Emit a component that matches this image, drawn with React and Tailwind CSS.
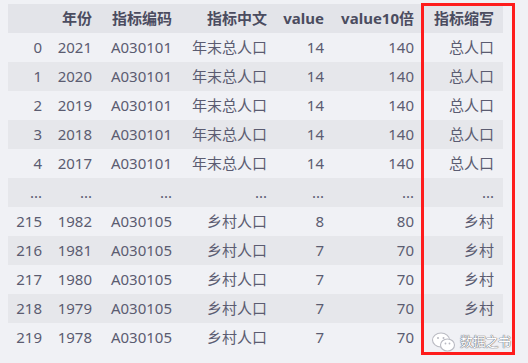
import React from "react"

const headers = ["", "年份", "指标编码", "指标中文", "value", "value10倍", "指标缩写"]
const widths = ["w-[43px]", "w-[50px]", "w-[80px]", "w-[95px]", "w-[57px]", "w-[90px]", "w-[80px]"]

// last row's 指标缩写 sits under the watermark
const rows = [
  ["0", "2021", "A030101", "年末总人口", "14", "140", "总人口"],
  ["1", "2020", "A030101", "年末总人口", "14", "140", "总人口"],
  ["2", "2019", "A030101", "年末总人口", "14", "140", "总人口"],
  ["3", "2018", "A030101", "年末总人口", "14", "140", "总人口"],
  ["4", "2017", "A030101", "年末总人口", "14", "140", "总人口"],
  ["...", "...", "...", "...", "...", "...", "..."],
  ["215", "1982", "A030105", "乡村人口", "8", "80", "乡村"],
  ["216", "1981", "A030105", "乡村人口", "7", "70", "乡村"],
  ["217", "1980", "A030105", "乡村人口", "7", "70", "乡村"],
  ["218", "1979", "A030105", "乡村人口", "7", "70", "乡村"],
  ["219", "1978", "A030105", "乡村人口", "7", "70", ""],
]

const WechatIcon = () => (
  <svg width="26" height="22" viewBox="0 0 26 22">
    <ellipse cx="10" cy="9" rx="8.5" ry="7" fill="#fff" stroke="#b9bac2" strokeWidth="1.1" />
    <ellipse cx="16.5" cy="14" rx="7" ry="6" fill="#fff" stroke="#b9bac2" strokeWidth="1.1" />
    <circle cx="7" cy="7" r="1" fill="#b9bac2" />
    <circle cx="12.5" cy="7" r="1" fill="#b9bac2" />
    <circle cx="14.5" cy="12.5" r="0.9" fill="#b9bac2" />
    <circle cx="18.5" cy="12.5" r="0.9" fill="#b9bac2" />
  </svg>
)

export default function App() {
  return (
    <div className="relative w-[528px] h-[363px] bg-[#f0f1f5] overflow-hidden font-['Noto_Sans','Noto_Sans_CJK_SC',sans-serif] text-[15px]">
      <div className="pt-[4px] pl-[8px]">
        <div className="flex h-[29px] bg-[#e3e4e9] w-[495px] text-[#4b4c60] font-bold">
          {headers.map((h, i) => (
            <div key={i} className={`${widths[i]} shrink-0 flex items-center justify-end pr-[9px]`}>{h}</div>
          ))}
        </div>
        {rows.map((r, ri) => (
          <div key={ri} className={`flex h-[29px] w-[495px] text-[#5b5c71] ${ri % 2 === 1 ? "bg-[#e6e7eb]" : ""}`}>
            {r.map((c, ci) => (
              <div key={ci} className={`${widths[ci]} shrink-0 flex items-center justify-end pr-[9px]`}>{c}</div>
            ))}
          </div>
        ))}
      </div>

      <div className="absolute left-[421px] top-[3px] w-[94px] h-[352px] border-[3px] border-[#fe1c1c]" />

      <div className="absolute left-[431px] top-[331px] flex items-center gap-[3px]">
        <WechatIcon />
        <span className="text-[13px] text-white tracking-[-0.3px] [text-shadow:0_0_1px_#6e6f78,0_0_1px_#6e6f78,0_0_1px_#6e6f78]">数据之书</span>
      </div>
    </div>
  )
}
